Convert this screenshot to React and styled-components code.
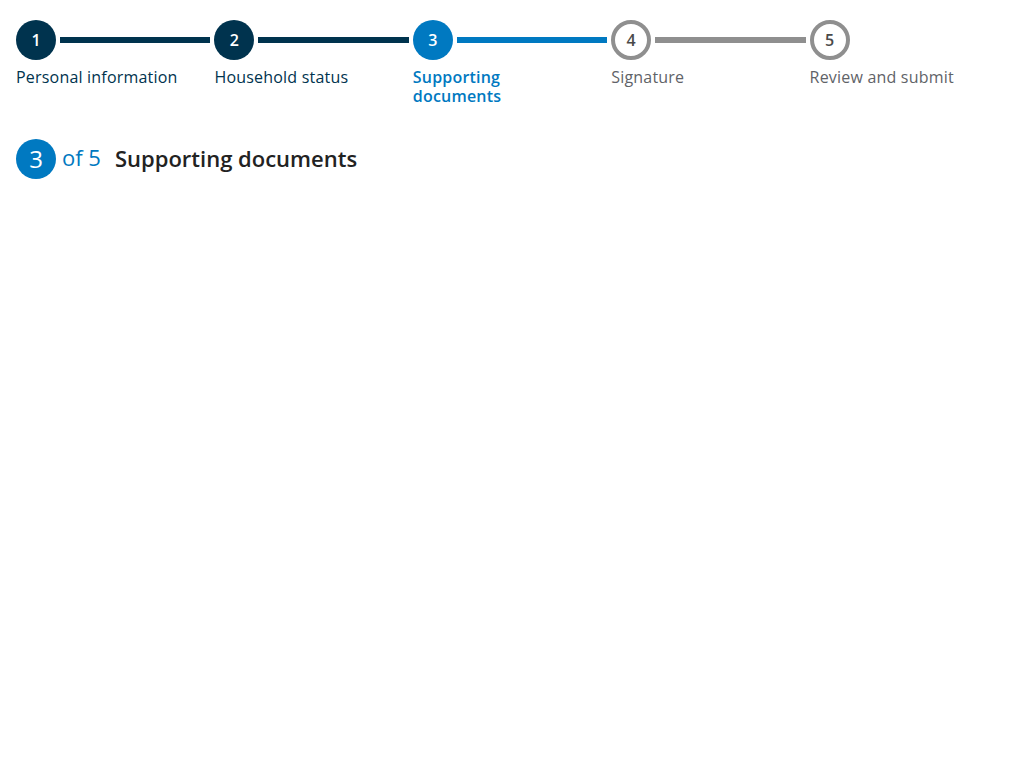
import React from "react";
import styled, { createGlobalStyle } from "styled-components";

const steps = [
  { label: "Personal information", state: "done" },
  { label: "Household status", state: "done" },
  { label: "Supporting documents", state: "current" },
  { label: "Signature", state: "todo" },
  { label: "Review and submit", state: "todo" },
];

const NAVY = "#00334e";
const BLUE = "#0079c1";
const GREY = "#8f8f8f";

const circleBg = { done: NAVY, current: BLUE, todo: "#fff" };
const labelColor = { done: NAVY, current: BLUE, todo: "#5f6368" };

export default function App() {
  const current = steps.findIndex((s) => s.state === "current");
  return (
    <Page>
      <GlobalStyle />
      <Stepper>
        {steps.map((s, i) => (
          <Step key={s.label}>
            <Track>
              <Circle $state={s.state}>{i + 1}</Circle>
              {i < steps.length - 1 && <Line $state={s.state} />}
            </Track>
            <Label $state={s.state}>{s.label}</Label>
          </Step>
        ))}
      </Stepper>
      <Heading>
        <BigCircle>{current + 1}</BigCircle>
        <Of>of {steps.length}</Of>
        <Title>{steps[current].label}</Title>
      </Heading>
    </Page>
  );
}

const GlobalStyle = createGlobalStyle`
  body {
    margin: 0;
    background: #fff;
    font-family: "Open Sans", "Noto Sans", sans-serif;
  }
`;

const Page = styled.div`
  padding: 20px 16px;
`;

const Stepper = styled.ol`
  display: grid;
  grid-template-columns: repeat(5, 1fr);
  list-style: none;
  margin: 0;
  padding: 0;
`;

const Step = styled.li`
  display: flex;
  flex-direction: column;
`;

const Track = styled.div`
  display: flex;
  align-items: center;
`;

const Circle = styled.div`
  width: 40px;
  height: 40px;
  box-sizing: border-box;
  flex: none;
  border-radius: 50%;
  display: flex;
  align-items: center;
  justify-content: center;
  font-size: 16px;
  font-weight: 600;
  background: ${(p) => circleBg[p.$state]};
  color: ${(p) => (p.$state === "todo" ? "#4a4a4a" : "#fff")};
  border: ${(p) => (p.$state === "todo" ? `4px solid ${GREY}` : "none")};
`;

const Line = styled.div`
  flex: 1;
  height: 6px;
  margin: 0 4px;
  background: ${(p) => (p.$state === "done" ? NAVY : p.$state === "current" ? BLUE : GREY)};
`;

const Label = styled.div`
  margin-top: 8px;
  max-width: 165px;
  font-size: 16px;
  line-height: 19.2px;
  letter-spacing: 0.2px;
  font-weight: ${(p) => (p.$state === "current" ? 600 : 400)};
  color: ${(p) => labelColor[p.$state]};
`;

const Heading = styled.div`
  display: flex;
  align-items: center;
  margin-top: 33px;
`;

const BigCircle = styled.div`
  width: 40px;
  height: 40px;
  border-radius: 50%;
  background: ${BLUE};
  color: #fff;
  display: flex;
  align-items: center;
  justify-content: center;
  font-size: 24px;
  font-weight: 400;
  padding-bottom: 2px;
  box-sizing: border-box;
`;

const Of = styled.span`
  margin: 0 0 4px 6px;
  font-size: 22px;
  color: ${BLUE};
`;

const Title = styled.h2`
  margin: 0 0 3px 14px;
  font-size: 22px;
  font-weight: 600;
  color: #222;
`;
